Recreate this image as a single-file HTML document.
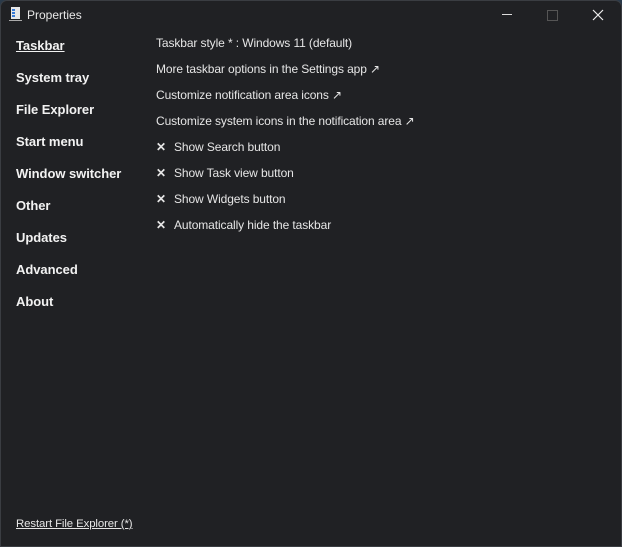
<!DOCTYPE html>
<html><head><meta charset="utf-8"><style>
html,body{margin:0;padding:0;width:622px;height:547px;overflow:hidden;background:#2a3a4a}
.win{position:absolute;left:0;top:0;width:620px;height:545px;background:#202124;border:1px solid #3a3d42;border-radius:7px 7px 0 0;font-family:"Liberation Sans",sans-serif;color:#fff}
.title{position:absolute;left:26px;top:7px;font-size:12px;color:#e8e8e8}
.nav{position:absolute;left:15px;font-size:13px;font-weight:bold;color:#f2f2f2;letter-spacing:-0.05px}
.row{position:absolute;left:155px;font-size:12px;color:#e6e6e6;white-space:nowrap;letter-spacing:-0.1px}
.x{display:inline-block;width:18px;font-weight:bold}
</style></head><body><div class="win">
<svg style="position:absolute;left:8px;top:6px" width="14" height="16"><rect x="2" y="0" width="9" height="12" fill="#e8e8e8"/><rect x="3" y="2" width="3" height="2" fill="#3a7bd5"/><rect x="3" y="5" width="3" height="2" fill="#3a7bd5"/><rect x="3" y="8" width="3" height="2" fill="#3a7bd5"/><rect x="0" y="13" width="13" height="1" fill="#aaa"/></svg>
<div class="title">Properties</div>
<div style="position:absolute;left:501px;top:13px;width:10px;height:1px;background:#ddd"></div>
<div style="position:absolute;left:546px;top:9px;width:9px;height:9px;border:1px solid #555"></div>
<svg style="position:absolute;left:591px;top:8px" width="12" height="12"><path d="M1 1L11 11M11 1L1 11" stroke="#eee" stroke-width="1.2"/></svg>
<div class="nav" style="top:37px;text-decoration:underline">Taskbar</div>
<div class="nav" style="top:69px">System tray</div>
<div class="nav" style="top:101px">File Explorer</div>
<div class="nav" style="top:133px">Start menu</div>
<div class="nav" style="top:165px">Window switcher</div>
<div class="nav" style="top:197px">Other</div>
<div class="nav" style="top:229px">Updates</div>
<div class="nav" style="top:261px">Advanced</div>
<div class="nav" style="top:293px">About</div>
<div class="row" style="top:35px">Taskbar style * : Windows 11 (default)</div>
<div class="row" style="top:61px">More taskbar options in the Settings app ↗</div>
<div class="row" style="top:87px">Customize notification area icons ↗</div>
<div class="row" style="top:113px">Customize system icons in the notification area ↗</div>
<div class="row" style="top:139px"><span class="x">✕</span>Show Search button</div>
<div class="row" style="top:165px"><span class="x">✕</span>Show Task view button</div>
<div class="row" style="top:191px"><span class="x">✕</span>Show Widgets button</div>
<div class="row" style="top:217px"><span class="x">✕</span>Automatically hide the taskbar</div>
<div class="row" style="left:15px;top:517px;font-size:11.4px;text-decoration:underline">Restart File Explorer (*)</div>
</div></body></html>
